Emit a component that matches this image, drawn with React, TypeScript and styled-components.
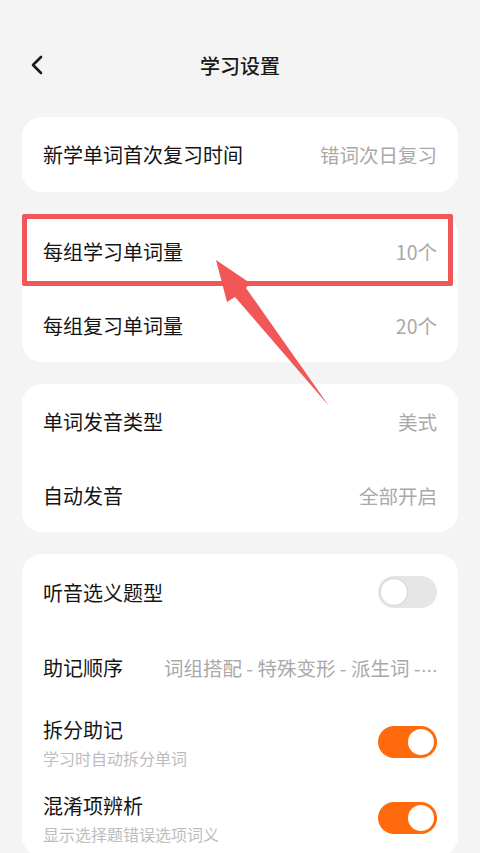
import React from 'react';
import styled, { createGlobalStyle } from 'styled-components';

const GlobalStyle = createGlobalStyle`
  html, body {
    margin: 0;
    padding: 0;
    background: #f4f4f4;
  }

  body {
    font-family: "Noto Sans CJK SC", "Noto Sans", sans-serif;
    color: #1c1c1c;
  }
`;

const Page = styled.div`
  position: relative;
  height: 853px;
  overflow: hidden;
  padding: 0 22px;
  box-sizing: border-box;
`;

const Header = styled.header`
  display: grid;
  grid-template-columns: 60px 1fr 60px;
  align-items: center;
  height: 60px;
  margin-top: 35px;
  margin-bottom: 22px;
`;

const BackButton = styled.button`
  display: flex;
  align-items: center;
  padding: 0 0 0 7px;
  border: none;
  background: none;
  color: #1a1a1a;
  cursor: pointer;
`;

const Title = styled.h1`
  margin: 0;
  text-align: center;
  font-size: 20px;
  font-weight: 500;
  color: #1a1a1a;
`;

const Card = styled.section`
  background: #fff;
  border-radius: 20px;
  margin-bottom: 22px;
`;

const Row = styled.div<{ $h?: number }>`
  display: flex;
  align-items: center;
  justify-content: space-between;
  gap: 24px;
  height: ${(p) => p.$h ?? 74}px;
  padding: 0 21px 0 21px;
`;

const TextBlock = styled.div`
  display: flex;
  flex-direction: column;
  gap: 2px;
`;

const Label = styled.span`
  flex-shrink: 0;
  font-size: 20px;
  font-weight: 400;
  color: #141414;
`;

const Sub = styled.span`
  font-size: 16px;
  color: #bdbdbd;
`;

const Value = styled.span`
  min-width: 0;
  font-size: 19.5px;
  color: #a9a9a9;
  white-space: nowrap;
  overflow: hidden;
`;

const Dots = styled.span`
  font-family: "Liberation Sans", sans-serif;
  letter-spacing: -1px;
`;

const Track = styled.div<{ $on?: boolean }>`
  position: relative;
  flex-shrink: 0;
  width: 59px;
  height: 32px;
  border-radius: 16px;
  background: ${(p) => (p.$on ? '#ff6a0c' : '#e6e6e6')};
`;

const Knob = styled.span<{ $on?: boolean }>`
  position: absolute;
  top: 3px;
  left: ${(p) => (p.$on ? '30px' : '3px')};
  width: 26px;
  height: 26px;
  border-radius: 50%;
  background: #fff;
  box-shadow: ${(p) => (p.$on ? 'none' : '0 0 0 1px #d6d6d6')};
`;

const Highlight = styled.div`
  position: absolute;
  left: 22px;
  top: 214px;
  width: 431px;
  height: 72px;
  border: 5px solid #f25757;
  border-radius: 2px;
  box-sizing: border-box;
  pointer-events: none;
`;

const Arrow = styled.svg`
  position: absolute;
  left: 210px;
  top: 255px;
  pointer-events: none;
`;

const Toggle = ({ on }: { on?: boolean }) => (
  <Track $on={on}>
    <Knob $on={on} />
  </Track>
);

export default function App() {
  return (
    <>
      <GlobalStyle />
      <Page>
        <Header>
          <BackButton aria-label="返回">
            <svg width="16" height="22" viewBox="0 0 16 22">
              <path d="M12 3 L4 11 L12 19" fill="none" stroke="#1a1a1a" strokeWidth="2.6" strokeLinecap="round" strokeLinejoin="round" />
            </svg>
          </BackButton>
          <Title>学习设置</Title>
          <span />
        </Header>

        <Card>
          <Row $h={75}>
            <Label>新学单词首次复习时间</Label>
            <Value>错词次日复习</Value>
          </Row>
        </Card>

        <Card>
          <Row>
            <Label>每组学习单词量</Label>
            <Value>10个</Value>
          </Row>
          <Row>
            <Label>每组复习单词量</Label>
            <Value>20个</Value>
          </Row>
        </Card>

        <Card>
          <Row>
            <Label>单词发音类型</Label>
            <Value>美式</Value>
          </Row>
          <Row>
            <Label>自动发音</Label>
            <Value>全部开启</Value>
          </Row>
        </Card>

        <Card>
          <Row $h={76}>
            <Label>听音选义题型</Label>
            <Toggle />
          </Row>
          <Row>
            <Label>助记顺序</Label>
            <Value>词组搭配 - 特殊变形 - 派生词 -<Dots>···</Dots></Value>
          </Row>
          <Row $h={76}>
            <TextBlock>
              <Label>拆分助记</Label>
              <Sub>学习时自动拆分单词</Sub>
            </TextBlock>
            <Toggle on />
          </Row>
          <Row $h={76}>
            <TextBlock>
              <Label>混淆项辨析</Label>
              <Sub>显示选择题错误选项词义</Sub>
            </TextBlock>
            <Toggle on />
          </Row>
        </Card>

        <Highlight />
        <Arrow width="125" height="155" viewBox="0 0 125 155">
          <polygon points="6,5 40,28 36,33 119,151 25,42 17,47" fill="#f25757" />
        </Arrow>
      </Page>
    </>
  );
}
